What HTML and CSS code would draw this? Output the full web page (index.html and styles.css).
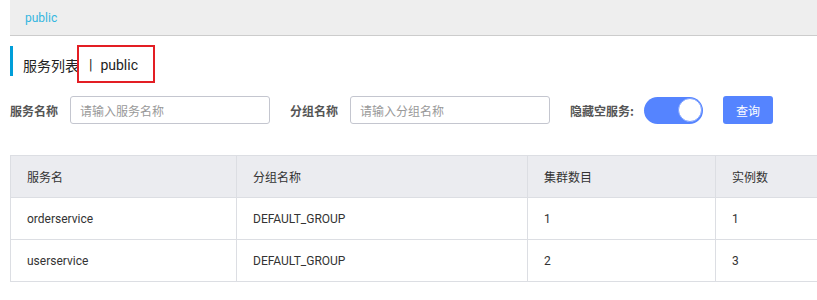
FILE: index.html
```html
<!DOCTYPE html>
<html lang="zh">
<head>
<meta charset="utf-8">
<link rel="stylesheet" href="styles.css">
</head>
<body>
<div class="page">
  <div class="topbar"><span class="ns">public</span></div>
  <div class="title">
    <span class="title-main">服务列表</span>
    <span class="title-sep">|</span>
    <span class="title-ns">public</span>
    <span class="mark"></span>
  </div>
  <div class="filters">
    <label class="flabel">服务名称</label>
    <input class="finput" placeholder="请输入服务名称">
    <label class="flabel gap">分组名称</label>
    <input class="finput" placeholder="请输入分组名称">
    <label class="flabel gap">隐藏空服务:</label>
    <span class="switch"><span class="knob"></span></span>
    <button class="btn">查询</button>
  </div>
  <table class="grid">
    <colgroup>
      <col class="c1"><col class="c2"><col class="c3"><col class="c4">
    </colgroup>
    <thead>
      <tr><th>服务名</th><th>分组名称</th><th>集群数目</th><th>实例数</th></tr>
    </thead>
    <tbody>
      <tr><td>orderservice</td><td>DEFAULT_GROUP</td><td>1</td><td>1</td></tr>
      <tr><td>userservice</td><td>DEFAULT_GROUP</td><td>2</td><td>3</td></tr>
    </tbody>
  </table>
</div>
</body>
</html>
```
FILE: styles.css
```css
html, body {
  margin: 0;
  padding: 0;
  background: #fff;
  overflow: hidden;
}
body {
  font-family: Roboto, "Noto Sans CJK SC", sans-serif;
  font-size: 12px;
  color: #333;
}
.page {
  padding-left: 10px;
  width: 1000px;
}
.topbar {
  height: 36px;
  background: #eeeeee;
  border-bottom: 1px solid #cccccc;
  display: flex;
  align-items: center;
  padding-left: 15px;
  box-sizing: border-box;
}
.ns {
  color: #33b6e0;
  font-size: 12px;
}
.title {
  position: relative;
  margin-top: 10px;
  height: 30px;
  border-left: 3px solid #009ed9;
  display: flex;
  align-items: center;
  padding-left: 10px;
  padding-top: 8px;
  box-sizing: border-box;
  font-size: 14px;
  color: #222;
  font-family: Roboto, "Noto Sans CJK SC", sans-serif;
}
.title-sep {
  margin-left: 10px;
  margin-right: 8px;
}
.mark {
  position: absolute;
  left: 64px;
  top: -1px;
  width: 74px;
  height: 34px;
  border: 2px solid #e31e24;
}
.filters {
  margin-top: 20px;
  display: flex;
  align-items: center;
  height: 28px;
}
.flabel {
  font-weight: bold;
  color: #555;
  font-family: "Noto Sans CJK SC", sans-serif;
  margin-right: 12px;
}
.flabel.gap {
  margin-left: 20px;
}
.finput {
  width: 200px;
  height: 28px;
  box-sizing: border-box;
  border: 1px solid #c4c6cf;
  border-radius: 3px;
  padding: 0 9px;
  font-family: "Noto Sans CJK SC", sans-serif;
  font-size: 12px;
  outline: none;
}
.finput::placeholder {
  color: #999;
}
.switch {
  width: 59px;
  height: 27px;
  border-radius: 14px;
  background: #5584ff;
  display: flex;
  align-items: center;
  justify-content: flex-end;
  padding-right: 1px;
  box-sizing: border-box;
  margin-left: -2px;
}
.knob {
  width: 24px;
  height: 24px;
  border-radius: 50%;
  background: #fff;
  border: 1px solid #7ea2ff;
  box-sizing: border-box;
}
.btn {
  margin-left: 20px;
  width: 50px;
  height: 28px;
  border: none;
  border-radius: 3px;
  background: #5584ff;
  color: #fff;
  font-family: "Noto Sans CJK SC", sans-serif;
  font-size: 12px;
  padding: 0;
}
.grid {
  margin-top: 31px;
  border-collapse: collapse;
  table-layout: fixed;
  width: 900px;
}
.c1 { width: 226px; }
.c2 { width: 291px; }
.c3 { width: 188px; }
.c4 { width: 195px; }
.grid th, .grid td {
  border: 1px solid #dcdee3;
  height: 42px;
  box-sizing: border-box;
  padding: 0 16px;
  text-align: left;
  font-weight: normal;
  color: #333;
}
.grid th {
  background: #ebecf0;
  font-family: "Noto Sans CJK SC", sans-serif;
}
```
